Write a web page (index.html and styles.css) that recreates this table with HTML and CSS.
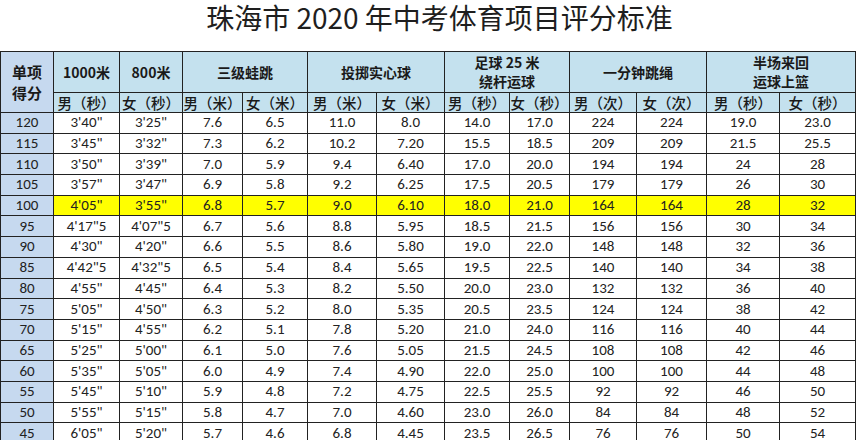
FILE: index.html
```html
<!DOCTYPE html>
<html lang="zh-CN">
<head>
<meta charset="utf-8">
<title>珠海市 2020 年中考体育项目评分标准</title>
<link rel="stylesheet" href="styles.css">
</head>
<body>
<div class="page">
  <h1 class="title">珠海市 2020 年中考体育项目评分标准</h1>
  <table class="score">
    <colgroup>
      <col style="width:53px"><col style="width:66px"><col style="width:63px"><col style="width:60px"><col style="width:65px"><col style="width:69px"><col style="width:68px"><col style="width:65px"><col style="width:60px"><col style="width:67px"><col style="width:70px"><col style="width:73px"><col style="width:76px">
    </colgroup>
    <thead>
      <tr class="h1">
        <th rowspan="2" class="lead">单项<br>得分</th>
        <th>1000米</th>
        <th>800米</th>
        <th colspan="2">三级蛙跳</th>
        <th colspan="2">投掷实心球</th>
        <th colspan="2">足球 25 米<br>绕杆运球</th>
        <th colspan="2">一分钟跳绳</th>
        <th colspan="2">半场来回<br>运球上篮</th>
      </tr>
      <tr class="h2">
        <th>男（秒）</th><th>女（秒）</th>
        <th>男（米）</th><th>女（米）</th>
        <th>男（米）</th><th>女（米）</th>
        <th>男（秒）</th><th>女（秒）</th>
        <th>男（次）</th><th>女（次）</th>
        <th>男（秒）</th><th>女（秒）</th>
      </tr>
    </thead>
    <tbody>
      <tr><td class="pt">120</td><td>3'40"</td><td>3'25"</td><td>7.6</td><td>6.5</td><td>11.0</td><td>8.0</td><td>14.0</td><td>17.0</td><td>224</td><td>224</td><td>19.0</td><td>23.0</td></tr>
      <tr><td class="pt">115</td><td>3'45"</td><td>3'32"</td><td>7.3</td><td>6.2</td><td>10.2</td><td>7.20</td><td>15.5</td><td>18.5</td><td>209</td><td>209</td><td>21.5</td><td>25.5</td></tr>
      <tr><td class="pt">110</td><td>3'50"</td><td>3'39"</td><td>7.0</td><td>5.9</td><td>9.4</td><td>6.40</td><td>17.0</td><td>20.0</td><td>194</td><td>194</td><td>24</td><td>28</td></tr>
      <tr><td class="pt">105</td><td>3'57"</td><td>3'47"</td><td>6.9</td><td>5.8</td><td>9.2</td><td>6.25</td><td>17.5</td><td>20.5</td><td>179</td><td>179</td><td>26</td><td>30</td></tr>
      <tr class="hl"><td class="pt">100</td><td>4'05"</td><td>3'55"</td><td>6.8</td><td>5.7</td><td>9.0</td><td>6.10</td><td>18.0</td><td>21.0</td><td>164</td><td>164</td><td>28</td><td>32</td></tr>
      <tr><td class="pt">95</td><td>4'17"5</td><td>4'07"5</td><td>6.7</td><td>5.6</td><td>8.8</td><td>5.95</td><td>18.5</td><td>21.5</td><td>156</td><td>156</td><td>30</td><td>34</td></tr>
      <tr><td class="pt">90</td><td>4'30"</td><td>4'20"</td><td>6.6</td><td>5.5</td><td>8.6</td><td>5.80</td><td>19.0</td><td>22.0</td><td>148</td><td>148</td><td>32</td><td>36</td></tr>
      <tr><td class="pt">85</td><td>4'42"5</td><td>4'32"5</td><td>6.5</td><td>5.4</td><td>8.4</td><td>5.65</td><td>19.5</td><td>22.5</td><td>140</td><td>140</td><td>34</td><td>38</td></tr>
      <tr><td class="pt">80</td><td>4'55"</td><td>4'45"</td><td>6.4</td><td>5.3</td><td>8.2</td><td>5.50</td><td>20.0</td><td>23.0</td><td>132</td><td>132</td><td>36</td><td>40</td></tr>
      <tr><td class="pt">75</td><td>5'05"</td><td>4'50"</td><td>6.3</td><td>5.2</td><td>8.0</td><td>5.35</td><td>20.5</td><td>23.5</td><td>124</td><td>124</td><td>38</td><td>42</td></tr>
      <tr><td class="pt">70</td><td>5'15"</td><td>4'55"</td><td>6.2</td><td>5.1</td><td>7.8</td><td>5.20</td><td>21.0</td><td>24.0</td><td>116</td><td>116</td><td>40</td><td>44</td></tr>
      <tr><td class="pt">65</td><td>5'25"</td><td>5'00"</td><td>6.1</td><td>5.0</td><td>7.6</td><td>5.05</td><td>21.5</td><td>24.5</td><td>108</td><td>108</td><td>42</td><td>46</td></tr>
      <tr><td class="pt">60</td><td>5'35"</td><td>5'05"</td><td>6.0</td><td>4.9</td><td>7.4</td><td>4.90</td><td>22.0</td><td>25.0</td><td>100</td><td>100</td><td>44</td><td>48</td></tr>
      <tr><td class="pt">55</td><td>5'45"</td><td>5'10"</td><td>5.9</td><td>4.8</td><td>7.2</td><td>4.75</td><td>22.5</td><td>25.5</td><td>92</td><td>92</td><td>46</td><td>50</td></tr>
      <tr><td class="pt">50</td><td>5'55"</td><td>5'15"</td><td>5.8</td><td>4.7</td><td>7.0</td><td>4.60</td><td>23.0</td><td>26.0</td><td>84</td><td>84</td><td>48</td><td>52</td></tr>
      <tr><td class="pt">45</td><td>6'05"</td><td>5'20"</td><td>5.7</td><td>4.6</td><td>6.8</td><td>4.45</td><td>23.5</td><td>26.5</td><td>76</td><td>76</td><td>50</td><td>54</td></tr>
    </tbody>
  </table>
</div>
</body>
</html>
```

FILE: styles.css
```css
html, body {
  margin: 0;
  padding: 0;
  background: #ffffff;
}

.page {
  width: 857px;
  height: 440px;
  overflow: hidden;
  display: flex;
  flex-direction: column;
}

.title {
  margin: 0 0 9px 0;
  height: 42px;
  line-height: 34px;
  text-align: center;
  font-family: "Noto Sans CJK SC", "Noto Sans", sans-serif;
  font-weight: 400;
  font-size: 28px;
  color: #1e1e1e;
  padding-left: 22px;
  flex: none;
}

.score {
  border-collapse: collapse;
  table-layout: fixed;
  width: 856px;
  margin-left: 0;
  flex: none;
}

.score th,
.score td {
  border: 1px solid #222222;
  padding: 0;
  text-align: center;
  vertical-align: middle;
  overflow: hidden;
  white-space: nowrap;
}

.score th {
  background: #c4e1ee;
  color: #1a1a1a;
  font-family: "Noto Sans CJK SC", sans-serif;
}

.h1 th {
  height: 40px;
  font-size: 14px;
  font-weight: 700;
  line-height: 19px;
}

.h2 th {
  height: 19px;
  font-size: 14.5px;
  font-weight: 500;
  line-height: 19px;
}

.score th.lead {
  background: #c6d9ef;
  font-size: 15px;
  line-height: 21px;
}

.score td {
  height: 19.7px;
  font-family: "Carlito", "Lato", "Open Sans", sans-serif;
  font-size: 15px;
  line-height: 19px;
  color: #222222;
  background: #ffffff;
}

.score td.pt {
  background: #c6d9ef;
}

.score tr.hl td {
  background: #ffff00;
}

.score tr.hl td.pt {
  background: #c6d9ef;
}
```
